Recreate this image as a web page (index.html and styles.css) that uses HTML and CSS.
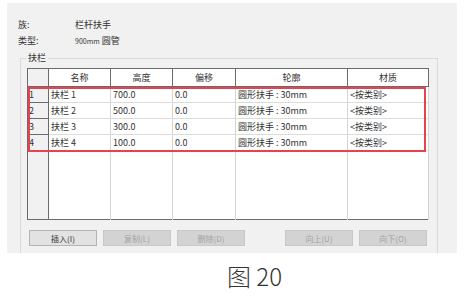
FILE: index.html
```html
<!DOCTYPE html>
<html lang="zh-CN">
<head>
  <meta charset="UTF-8" />
  <title>栏杆扶手 - 扶栏</title>
  <link rel="stylesheet" href="styles.css">
</head>
<body>
  <div class="dialog">
    <div class="props">
      <span>族:</span><span>栏杆扶手</span>
      <span>类型:</span><span><small>900mm</small> 圆管</span>
    </div>

    <div class="group">
      <div class="group-title">扶栏</div>
      <div class="grid-wrap">
        <table class="grid">
          <colgroup>
            <col class="c-no"><col class="c-name"><col class="c-h"><col class="c-off"><col class="c-prof"><col class="c-mat">
          </colgroup>
          <thead>
            <tr><th></th><th>名称</th><th>高度</th><th>偏移</th><th>轮廓</th><th>材质</th></tr>
          </thead>
          <tbody>
            <tr><td class="no">1</td><td>扶栏 1</td><td>700.0</td><td>0.0</td><td>圆形扶手 : 30mm</td><td>&lt;按类别&gt;</td></tr>
            <tr><td class="no">2</td><td>扶栏 2</td><td>500.0</td><td>0.0</td><td>圆形扶手 : 30mm</td><td>&lt;按类别&gt;</td></tr>
            <tr><td class="no">3</td><td>扶栏 3</td><td>300.0</td><td>0.0</td><td>圆形扶手 : 30mm</td><td>&lt;按类别&gt;</td></tr>
            <tr><td class="no">4</td><td>扶栏 4</td><td>100.0</td><td>0.0</td><td>圆形扶手 : 30mm</td><td>&lt;按类别&gt;</td></tr>
            <tr class="filler"><td class="no"></td><td></td><td></td><td></td><td></td><td></td></tr>
          </tbody>
        </table>
        <div class="highlight"></div>
      </div>

      <div class="actions">
        <button class="btn">插入(I)</button>
        <button class="btn" disabled>复制(L)</button>
        <button class="btn" disabled>删除(D)</button>
        <span class="spacer"></span>
        <button class="btn" disabled>向上(U)</button>
        <button class="btn" disabled>向下(O)</button>
      </div>
    </div>
  </div>

  <div class="caption">图 20</div>
</body>
</html>
```

FILE: styles.css
```css
body {
  margin: 0;
  background-color: #fff;
  font-family: "Noto Sans CJK SC", sans-serif;
  color: #333;
}

.dialog {
  margin: 3px 7px 0;
  height: 250px;
  background-color: #f1f1f1;
  box-sizing: border-box;
  padding: 16px 0 0 11px;
  overflow: hidden;
  font-size: 9px;
}

.props {
  display: grid;
  grid-template-columns: 57px auto;
  row-gap: 4px;
  line-height: 12px;
}

.props small {
  font-size: 7px;
}

.group {
  position: relative;
  margin: 11px 0 0 2px;
  width: 418px;
  height: 220px;
  border: 1px solid #dadada;
  border-bottom: none;
  padding: 9px 0 0 6px;
  box-sizing: border-box;
}

.group-title {
  position: absolute;
  top: -8px;
  left: 5px;
  padding: 0 2px;
  background-color: #f1f1f1;
  line-height: 14px;
}

.grid-wrap {
  position: relative;
  width: 401px;
}

.grid {
  width: 401px;
  border-collapse: collapse;
  table-layout: fixed;
  background-color: #fff;
  border: 1px solid #6b6b6b;
}

.c-no { width: 21px; }
.c-name { width: 62px; }
.c-h { width: 62px; }
.c-off { width: 63px; }
.c-prof { width: 112px; }
.c-mat { width: 81px; }

.grid th {
  height: 17px;
  padding: 0;
  font-weight: normal;
  border: 1px solid #6b6b6b;
  background-color: #fff;
}

.grid th:first-child {
  background-color: #f1f1f1;
}

.grid td {
  height: 15px;
  padding: 0 0 0 2px;
  border-left: 1px solid #d4d4d4;
  border-right: 1px solid #d4d4d4;
  border-bottom: 1px solid #dcdcdc;
  white-space: nowrap;
  overflow: hidden;
  line-height: 14px;
}

.grid td.no {
  background-color: #f1f1f1;
  border: 1px solid #6b6b6b;
  padding-left: 1px;
}

.grid .filler td {
  height: 68px;
  border-bottom: none;
}

.grid .filler td.no {
  border-bottom: 1px solid #6b6b6b;
}

.highlight {
  position: absolute;
  top: 19px;
  left: 1px;
  width: 398px;
  height: 65px;
  border: 2px solid #e8414f;
  box-sizing: border-box;
}

.actions {
  display: flex;
  gap: 6px;
  margin: 10px 0 0 2px;
}

.spacer {
  width: 28px;
}

.btn {
  width: 68px;
  height: 16px;
  padding: 0;
  font-family: inherit;
  font-size: 8px;
  color: #333;
  background-color: #e2e2e2;
  border: 1px solid #b4b4b4;
}

.btn:disabled {
  color: #a3a3a3;
  background-color: #d3d3d3;
  border-color: #c8c8c8;
}

.caption {
  margin: 8px 0 0 227px;
  font-size: 24px;
  font-weight: 300;
  line-height: 30px;
  color: #333;
}
```
